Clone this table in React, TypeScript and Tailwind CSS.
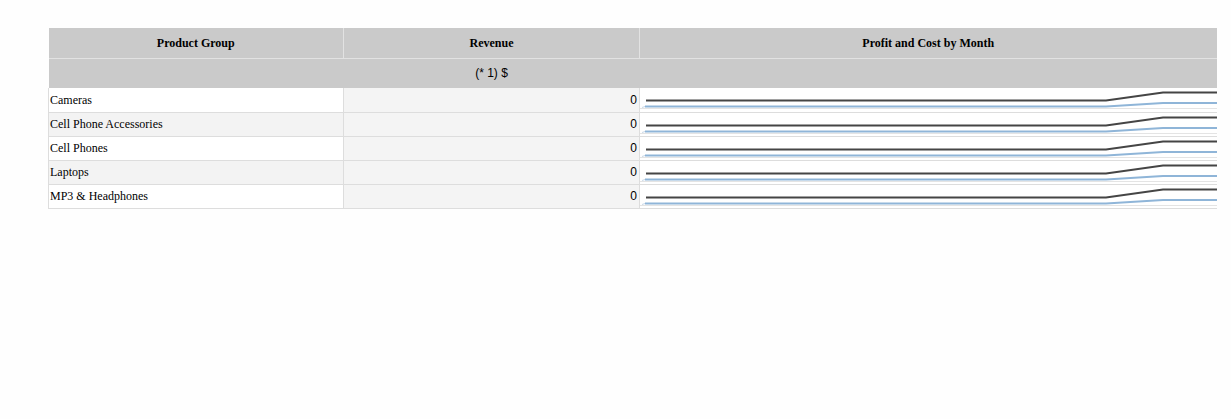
import React from "react";

const rows = ["Cameras", "Cell Phone Accessories", "Cell Phones", "Laptops", "MP3 & Headphones"];

function Spark() {
  return (
    <svg width="577" height="23" className="block">
      <line x1="0" y1="20.5" x2="577" y2="20.5" stroke="#e4e4e4" strokeWidth="1" />
      <polyline points="6,12.5 466,12.5 523,4.5 577,4.5" fill="none" stroke="#454545" strokeWidth="2" />
      <polyline points="5,18.5 466,18.5 523,15 577,15" fill="none" stroke="#8fb5d8" strokeWidth="2" />
      <polyline points="2,19.5 5,18.5" fill="none" stroke="#c8d8e8" strokeWidth="1" />
    </svg>
  );
}

export default function App() {
  return (
    <div className="w-[1231px] h-[419px] bg-[#fefefe] pt-[28px] pl-[48px] overflow-hidden">
      <table className="border-collapse table-fixed w-[1168px] text-[12px] text-black" style={{ fontFamily: '"Liberation Serif", "Times New Roman", serif' }}>
        <colgroup>
          <col className="w-[295px]" />
          <col className="w-[296px]" />
          <col className="w-[577px]" />
        </colgroup>
        <thead>
          <tr className="bg-[#cacaca] h-[30px]">
            <th className="font-bold text-center border-r border-b border-[#e2e2e2] p-0">Product Group</th>
            <th className="font-bold text-center border-r border-b border-[#e2e2e2] p-0">Revenue</th>
            <th className="font-bold text-center border-b border-[#e2e2e2] p-0">Profit and Cost by Month</th>
          </tr>
          <tr className="bg-[#cacaca] h-[30px]">
            <th className="p-0"></th>
            <th className="p-0 font-normal text-center" style={{ fontFamily: '"Liberation Sans", Arial, sans-serif' }}>(* 1) $</th>
            <th className="p-0"></th>
          </tr>
        </thead>
        <tbody>
          {rows.map((r, i) => (
            <tr key={r} className="h-[24px]">
              <td className={`${i % 2 === 1 ? "bg-[#f3f3f3]" : "bg-white"} border-l border-r border-b border-[#dddddd] p-0 pl-[1px] whitespace-nowrap`}>{r}</td>
              <td className="bg-[#f4f4f4] border-r border-b border-[#dddddd] text-right p-0 pr-[2px]" style={{ fontFamily: '"Liberation Sans", Arial, sans-serif' }}>0</td>
              <td className="bg-white border-b border-[#dddddd] p-0 overflow-hidden">
                <Spark />
              </td>
            </tr>
          ))}
        </tbody>
      </table>
    </div>
  );
}
